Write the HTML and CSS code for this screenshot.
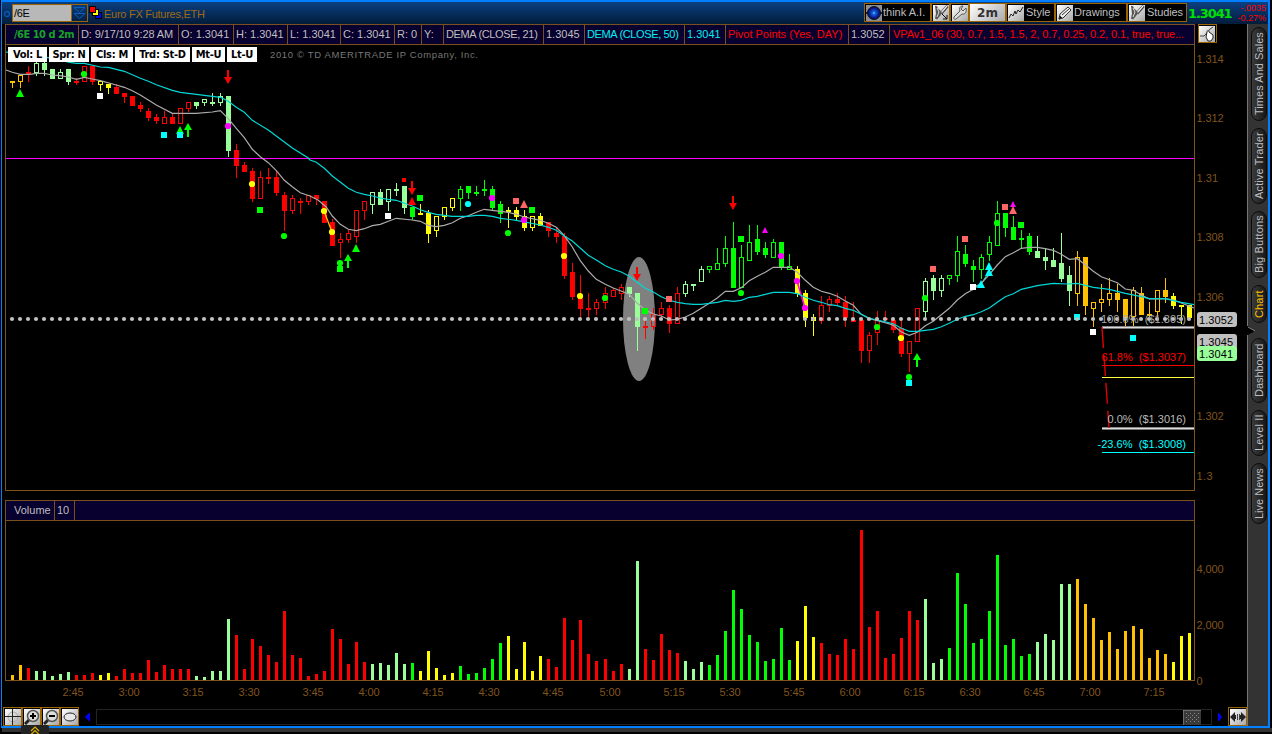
FILE: index.html
```html
<!DOCTYPE html>
<html lang="en">
<head>
<meta charset="utf-8">
<title>Euro FX Futures</title>
<link rel="stylesheet" href="styles.css">
</head>
<body>
<svg class="defs" width="0" height="0">
  <defs>
    <linearGradient id="metal" x1="0" y1="0" x2="1" y2="1"><stop offset="0" stop-color="#ffffff"/><stop offset="1" stop-color="#a8a8a8"/></linearGradient>
    <radialGradient id="orb"><stop offset="0" stop-color="#2fe0ff"/><stop offset=".25" stop-color="#1560d8"/><stop offset=".7" stop-color="#0a1e96"/><stop offset="1" stop-color="#04104e"/></radialGradient>
    <symbol id="brush" viewBox="0 0 16 16"><rect width="16" height="16" fill="url(#metal)"/><path d="M14.500 1 8 8.500" stroke="#444" stroke-width="3"/><path d="M14 1 8 8" stroke="#eee" stroke-width="1.2"/><path d="M2 1c3-1 2 3 5 4l2 3-2 3-3 3.500-2-1 1-5z" fill="#555"/><path d="M4 3l2 4-2 5" stroke="#ddd" fill="none"/></symbol>
  </defs>
</svg>
<div class="window">
  <header class="titlebar">
    <svg class="ring" width="8" height="8"><circle cx="4" cy="4" r="2.5" fill="none" stroke="#0b56b0" stroke-width="1.3"/></svg>
    <div class="symbol"><span class="symbol-text">/6E</span><svg class="symbol-drop" width="16" height="16"><path d="M2 2.500h11L7.500 7.500zM2 8.500h11L7.500 13.500z" fill="none" stroke="#0b60c0"/></svg></div>
    <svg class="squares" width="13" height="13"><path d="M6 6h7v7H6z" fill="#000"/><path d="M7 7h5v5H7z" fill="#00f"/><path d="M3 3h7v7H3z" fill="#000"/><path d="M4 4h5v5H4z" fill="#ff0"/><path d="M0 0h7v7H0z" fill="#000"/><path d="M1 1h5v5H1z" fill="#f00"/></svg>
    <span class="instrument">Euro FX Futures,ETH</span>
    <nav class="toolbar">
      <button class="tool think"><svg width="16" height="16"><rect width="16" height="16" fill="#8a8e98"/><path d="M0 8h16" stroke="#222" stroke-width="2"/><circle cx="8" cy="8" r="6.500" fill="url(#orb)" stroke="#111"/></svg><span>think A.I.</span></button>
      <button class="tool icon"><svg width="16" height="16"><use href="#brush"/><path d="M9 9l5 5M14 10v4h-4" stroke="#111" fill="none"/></svg></button>
      <button class="tool icon"><svg width="16" height="16"><rect width="16" height="16" fill="url(#metal)"/><path d="M14 3l-3 3-2-2 2-3C8 1 7 3 8 6L2 12c-1 2 1 3 2 2l6-5c3 1 5-2 4-6z" fill="#ddd" stroke="#555"/></svg></button>
      <button class="tool period">2m</button>
      <button class="tool style"><svg width="16" height="16"><rect width="16" height="16" fill="url(#metal)"/><path d="M1 13l2-4 2 2 2-5 1 3 2-4 2 2 3-5" stroke="#222" fill="none"/></svg><span>Style</span></button>
      <button class="tool drawings"><svg width="16" height="16"><rect width="16" height="16" fill="url(#metal)"/><path d="M2 14l1-5 8-7 3 3-8 8z" fill="#eee" stroke="#333"/><path d="M2 14l1-3 2 2zM5 10l7-6" stroke="#333"/></svg><span>Drawings</span></button>
      <button class="tool studies"><svg width="16" height="16"><use href="#brush"/></svg><span>Studies</span></button>
    </nav>
    <strong class="last">1.3041</strong>
    <div class="change"><span>-.0035</span><span>-0.27%</span></div>
  </header>

  <div class="workspace">
    <main class="chart">
      <div class="info-row">
        <div class="readout">
          <span class="head">/6E 10 d 2m</span><span class="date">D: 9/17/10 9:28 AM</span><span>O: 1.3041</span><span>H: 1.3041</span><span>L: 1.3041</span><span>C: 1.3041</span><span>R: 0</span><span>Y:</span><span class="tight">DEMA (CLOSE, 21)</span><span>1.3045</span><span class="cyan tight">DEMA (CLOSE, 50)</span><span class="cyan">1.3041</span><span class="red pivot">Pivot Points (Yes, DAY)</span><span>1.3052</span><span class="red vpa">VPAv1_06 (30, 0.7, 1.5, 1.5, 2, 0.7, 0.25, 0.2, 0.1, true, true...</span>
        </div>
        <button class="hand"><svg width="16" height="16"><rect width="16" height="16" fill="url(#metal)"/><path d="M1 10h4l2-2 4-5 3-2" stroke="#444" fill="none"/><path d="M8 6c0-2 2-2 2 0l4 3v3l-2 3H9l-2-4z" fill="#fff" stroke="#222"/></svg></button>
      </div>
      <div class="price-pane">
        <svg id="price" width="1241" height="455" viewBox="5 45 1241 455"></svg>
        <div class="badges"><b>Vol: L</b><b>Spr: N</b><b>Cls: M</b><b>Trd: St-D</b><b>Mt-U</b><b>Lt-U</b></div>
      </div>
      <div class="volume-head"><span>Volume</span><span>10</span></div>
      <svg id="volume" width="1241" height="186" viewBox="5 521 1241 186"></svg>
      <footer class="bottom">
        <button><svg width="16" height="16"><rect width="16" height="16" fill="url(#metal)"/><circle cx="8" cy="8" r="5" fill="none" stroke="#aaa"/><path d="M7.500 0v16M0 7.500h16" stroke="#222"/></svg></button>
        <button><svg width="16" height="16"><rect width="16" height="16" fill="url(#metal)"/><path d="M1 15l4-4" stroke="#222" stroke-width="3"/><circle cx="9" cy="7" r="5.5" fill="#ddd" stroke="#555" stroke-width="1.5"/><path d="M9 4v6M6 7h6" stroke="#000" stroke-width="2"/></svg></button>
        <button><svg width="16" height="16"><rect width="16" height="16" fill="url(#metal)"/><path d="M1 15l4-4" stroke="#222" stroke-width="3"/><circle cx="9" cy="7" r="5.5" fill="#ddd" stroke="#555" stroke-width="1.5"/><path d="M6 7h6" stroke="#000" stroke-width="2"/></svg></button>
        <button><svg width="16" height="16"><rect width="16" height="16" fill="url(#metal)"/><ellipse cx="8" cy="8" rx="6" ry="4" fill="#e8e8e8" stroke="#222"/></svg></button>
        <svg class="arrow-left" width="17" height="19"><path d="M11 6v8h-1l-4-4 4-4z" fill="#00f"/></svg>
        <div class="track"><svg width="18" height="15"><rect width="18" height="15" fill="#3a3a3a"/><path d="M0 15V0h18" stroke="#999" fill="none"/><path d="M3 3.5h13M5 5.5h12M3 7.5h13M5 9.5h12M3 11.5h13" stroke="#888" stroke-dasharray="1 3"/></svg><i></i></div>
        <svg class="arrow-right" width="16" height="19"><path d="M6 6v8h1l3-4-3-4z" fill="#00f"/></svg>
        <button><svg width="16" height="16"><rect width="16" height="16" fill="url(#metal)"/><path d="M0 8l5-5v3h1v4H5v3zM16 8l-5-5v3h-1v4h1v3z" fill="#222"/><path d="M7.500 5v6M9.500 5v6" stroke="#444"/></svg></button>
      </footer>
    </main>
    <aside class="side">
      <span class="tab t1">Times And Sales</span><span class="tab t2">Active Trader</span><span class="tab t3">Big Buttons</span><span class="tab t4 active">Chart</span><span class="tab t5">Dashboard</span><span class="tab t6">Level II</span><span class="tab t7">Live News</span>
      <svg class="notch" width="9" height="10"><path d="M0 0h1l7 5-7 4H0z" fill="#000"/><path d="M1 1l7 4" stroke="#888"/></svg>
    </aside>
  </div>
</div>
<div class="drawer"><svg width="28" height="9"><path d="M10 6l4-4 4 4M10 9.500l4-4 4 4" fill="none" stroke="#e0b000" stroke-width="1.2"/></svg></div>
<script src="chart.js"></script>
</body>
</html>
```
FILE: styles.css
```css
* { box-sizing: border-box; }
body { margin: 0; width: 1272px; height: 734px; overflow: hidden; position: relative; background: #000; font: 11px/13px "Liberation Sans", Arial, sans-serif; color: #bfbfbf; }
body::after { content: ""; display: block; height: 4px; margin-left: 2px; background: #333; }
.defs { position: absolute; }
button { margin: 0; padding: 0; border: 1px solid #9b6505; background: #000; color: inherit; font: inherit; }
svg { display: block; flex: none; }
svg text { white-space: pre; }
.window { width: 1269px; height: 728px; margin-left: 1px; border: 2px solid #0080ff; border-left-width: 1px; display: flex; flex-direction: column; }

.titlebar { height: 22px; padding: 1px 1px 0 1px; display: flex; align-items: flex-start; background: linear-gradient(#0b4082, #021c3a); }
.ring { margin-top: 7px; }
.symbol { display: flex; width: 76px; height: 18px; margin-left: 1px; margin-top: 1px; border: 1px solid #9b6505; }
.symbol-text { width: 58px; padding: 2px 1px; background: #b8b8b8; color: #000; letter-spacing: -.3px; }
.symbol-drop { border-left: 1px solid #9b6505; }
.squares { margin: 3px 0 0 1px; }
.instrument { margin: 5px 0 0 2px; color: #a06a10; letter-spacing: -.27px; }
.toolbar { display: flex; margin-left: auto; width: 323px; }
.tool { display: flex; align-items: center; height: 19px; gap: 1px; padding: 0 1px; overflow: hidden; white-space: nowrap; }
.think { width: 67px; }
.icon { width: 19px; padding: 0; justify-content: center; }
.period { width: 37px; justify-content: center; color: #333; background: linear-gradient(135deg, #fff, #aaa); font: bold 12px "DejaVu Sans", sans-serif; }
.style { width: 49px; gap: 2px; }
.drawings { width: 72px; }
.studies { width: 60px; gap: 2px; letter-spacing: -.1px; }
.last { width: 43px; margin: 4px 6px 0 1px; color: #00e000; font: bold 13px/14px "DejaVu Sans", sans-serif; letter-spacing: -1.1px; }
.change { display: flex; flex-direction: column; width: 30px; color: #f00; font-size: 9px; line-height: 10px; text-align: right; padding-right: 1px; }

.workspace { display: flex; height: 702px; }
.chart { width: 1245px; padding-left: 2px; display: flex; flex-direction: column; }
.info-row { display: flex; height: 21px; margin-left: 1px; }
.readout { display: grid; width: 1190px; border: 1px solid #7a5020; grid-template-columns: 73px 100px 55px 54px 53px 54px 27px 22px 100px 41px 100px 41px 123px 41px 304px; background: #08002e; }
.readout span { padding: 3px 0 0 2px; white-space: nowrap; overflow: hidden; border-right: 1px solid #7a5020; }
.readout span:last-child { border-right: 0; }
.readout .head { color: #18a028; font: bold 11px/13px "DejaVu Sans Condensed", "DejaVu Sans", sans-serif; padding-left: 8px; letter-spacing: -.5px; }
.readout .date { letter-spacing: -.12px; }
.readout .tight { letter-spacing: -.36px; }
.readout .cyan { color: #00f0f0; }
.readout .red { color: #f00; }
.readout .vpa { letter-spacing: -.1px; padding-left: 3px; }
.hand { width: 19px; height: 19px; margin-left: 3px; }
.price-pane { position: relative; height: 455px; margin-left: 1px; }
.badges { position: absolute; left: 3px; top: 2px; display: flex; gap: 2px; color: #000; }
.badges b { height: 15px; background: #fff; font: bold 11px/15px "DejaVu Sans Condensed", "DejaVu Sans", sans-serif; letter-spacing: -.3px; text-align: center; width: 39px; white-space: nowrap; }
.badges b:nth-child(2) { width: 40px; }
.badges b:nth-child(3) { width: 42px; }
.badges b:nth-child(4) { width: 55px; }
.badges b:nth-child(5) { width: 33px; }
.badges b:nth-child(6) { width: 30px; }
.volume-head { display: flex; width: 1190px; height: 21px; margin-left: 1px; border: 1px solid #7a5020; background: #08002e; }
.volume-head span { padding: 3px 0 0 8px; width: 49px; border-right: 1px solid #7a5020; }
.volume-head span + span { padding-left: 2px; width: 20px; }
#volume { margin-left: 1px; }
.bottom { display: flex; height: 19px; margin-left: -1px; }
.bottom button { width: 19px; height: 19px; display: flex; align-items: center; justify-content: center; flex: none; }
.track { flex: 1; display: flex; justify-content: flex-end; align-items: center; margin: 2px 0 1px; border: 1px solid #242424; border-right: 0; }
.track i { width: 11px; height: 15px; border-right: 1px solid #222; }

.side { position: relative; width: 21px; background: #333; border-left: 1px solid #777; display: flex; flex-direction: column; gap: 7px; padding: 3px 0 0 3px; }
.tab { width: 16px; flex: none; display: flex; align-items: center; justify-content: center; writing-mode: vertical-rl; transform: rotate(180deg); border: 1px solid #0b0b0b; border-radius: 8px; background: linear-gradient(90deg, #181818, #3b3b3b); letter-spacing: .15px; white-space: nowrap; }
.t1 { height: 94px; letter-spacing: .05px; } .t2 { height: 76px; } .t3 { height: 67px; } .t4 { height: 38px; } .t5 { height: 65px; margin-top: 8px; letter-spacing: -.05px; } .t6 { height: 46px; } .t7 { height: 61px; letter-spacing: 0; }
.active { color: #ffc000; }
.notch { position: absolute; left: -1px; top: 302px; }
.drawer { position: absolute; left: 21px; top: 725px; width: 28px; height: 9px; background: #222; border-radius: 2px 2px 0 0; }
```
FILE: chart.js
```js
const C = { O: '#ffc000', R: '#ff0000', L: '#99ff99', G: '#00ff00', Y: '#ffff00', W: '#ffffff', C: '#00ffff', M: '#ff00ff', S: '#ff6666' };
const BROWN = '#80541e';
const slot = i => 12 + 8 * i + (i >= 74 ? 1 : 0);

// Each candle: colour + f(illed)/h(ollow), high, body top, body bottom, low, in thirds of a pixel below the block's base.
const blocks = [
  [60, `Of 63 63 69 84|Oh 45 45 66 84|Rf 18 36 42 66|Lh 3 9 39 48|Lf 3 9 30 48|Lf 27 27 57 57|Lh 27 36 57 57|Lf 27 27 66 75|Rf 54 63 69 75|Rh 18 18 66 66|Rf 18 18 66 75|Yh 63 63 75 93|Yf 72 72 84 102|Rf 72 81 102 102|Rf 99 99 111 129|Rf 108 108 138 138|Rf 126 135 147 156|Rf 144 153 174 183|Rf 162 171 183 192|Rh 153 171 192 192|Rf 162 171 192 192|Rh 144 144 192 192|Rh 126 126 147 156|Lf 126 126 138 147|Lh 117 117 129 138|Lf 99 126 132 138|Lh 99 108 129 138|Lf 108 108 273 291|Rf 252 270 318 354|Rf 306 315 336 336|Rf 324 333 417 426|Rh 333 351 417 417|Rf 324 351 357 372|Rf 333 351 399 408|Rf 396 405 453 513|Rh 405 414 453 462|Rf 414 423 429 462|Rh 405 405 426 435|Rf 405 405 417 435`],
  [160, `Rf 123 123 189 189|Rf 177 186 258 258|Rh 219 237 249 294|Rh 210 219 240 249|Rh 150 150 231 249|Rh 123 123 153 180|Lh 96 96 135 162|Lf 87 96 135 135|Lh 87 87 126 153|Lf 69 87 93 108|Lf 78 78 144 162|Gf 141 141 171 180|Yf 132 159 165 165|Yf 150 159 222 249|Yh 168 168 213 231|Yh 141 141 171 180|Yh 114 114 144 153|Gh 78 87 117 153|Gf 78 78 99 117|Gf 78 96 102 108|Gf 60 87 93 108|Gf 78 87 144 150|Gf 123 132 162 189|Yf 141 150 156 204|Yf 141 150 171 180|Yf 150 168 204 213|Yh 168 168 204 213|Yf 159 168 198 198|Rf 186 186 213 231|Rf 204 219 231 249|Rf 219 228 348 357|Rf 309 336 411 420|Rf 345 405 447 471|Rf 399 444 450 471|Rh 417 426 447 465`],
  [180, `Rh 321 339 369 387|Rh 324 330 351 351|Rh 312 321 342 360|Lf 321 321 342 351|Lf 339 339 441 513|Rf 420 438 444 477|Rh 384 402 441 450|Rh 366 384 405 420|Rf 375 384 432 459|Rh 321 339 432 432|Lh 303 312 342 351|Lf 312 312 318 333|Lh 258 267 306 306|Gh 258 258 270 279|Gh 204 249 270 270|Gh 168 204 252 261|Gf 126 204 324 324|Gh 195 231 324 324|Gh 135 186 243 243|Gf 135 177 216 225|Gf 186 204 225 234|Gh 177 186 234 234|Gf 186 186 264 270|Gh 222 258 270 270|Yf 258 267 342 351|Yf 330 339 414 441|Yf 402 411 423 468|Rh 348 375 423 432|Rh 348 357 378 396|Rf 339 357 369 378|Rf 348 366 414 441|Rf 366 420 426 426|Rf 420 420 513 549|Rh 456 465 513 549|Rh 393 420 459 495|Rf 393 414 420 420|Rf 420 420 450 459|Rf 420 444 522 531|Rh 483 483 522 576|Rh 384 384 486 486|Lh 294 303 396 414|Lf 285 294 333 360|Lh 285 294 333 351|Gh 285 285 297 315|Gh 168 213 288 306|Gf 195 222 252 261|Gf 240 258 270 306|Gh 222 231 270 297|Gh 168 186 225 243|Gh 63 99 198 198|Gf 99 99 144 171|Gf 108 141 180 180|Gf 150 174 180 204|Gf 159 168 216 225|Lf 168 213 234 234|Lf 207 231 243 270|Lf 204 240 261 261|Lf 159 249 297 306|Lf 258 285 333 378|Oh 213 231 342 378|Of 231 231 378 405|Oh 366 366 387 441|Oh 312 357 369 396|Oh 294 339 360 378|Of 312 339 360 396|Of 357 357 414 441|Oh 321 330 411 441|Of 321 339 405 405|Of 366 402 408 411|Oh 330 330 396 411|Of 294 330 351 369|Yf 339 348 378 387|Yf 375 375 381 432|Yf 375 375 414 414`]
];

const lines = {
  fast: [
    [0, 60, '18,30 37,37 61,43 90,43 109,40 133,40 157,45 181,47 205,51 229,58 253,52 277,57 301,62 349,75 373,82 397,92 421,105 469,135 517,160 589,160 637,156 661,152 685,176 709,205 733,233 757,268 781,290 805,308 829,332 853,361 877,380 901,398'],
    [310, 160, '0,108 24,120 48,140 67,168 91,193 115,208 139,212 163,206 187,197 211,193 235,184 259,175 307,180 331,184 355,196 379,200 403,196 427,188 451,175 475,167 499,157 523,148 595,157 619,163 643,171 691,181 715,190 739,202 763,227 787,261 811,302 835,333 859,358'],
    [600, 180, '16,313 40,324 88,343 112,370 136,390 160,402 184,408 208,420 232,418 256,411 280,400 304,385 328,370 352,354 376,334 400,334 424,323 448,302 472,289 496,277 520,262 568,262 592,277 616,301 640,322 664,334 688,340 712,349 736,363 760,376 784,403 808,416 832,422 856,428'],
    [880, 180, '40,436 64,456 88,466 112,457 136,437 160,424 184,404 208,385 232,360 256,341 280,328 304,310 328,284 352,255 376,230 400,218 424,205 448,202 472,202 496,206 520,211 544,223 568,238 592,236 616,254 640,274 664,290 688,299 712,308 736,327 760,331 784,345 808,357 856,356 880,360 904,369 942,384']
  ],
  slow: [
    [0, 60, '18,-24 140,-8 210,7 229,10 253,10 301,21 325,22 373,34 421,55 445,64 469,74 517,91 541,97 661,112 685,124 709,142 733,157 757,181 805,210 853,246 877,264 925,294'],
    [310, 160, '0,0 19,7 43,25 67,48 115,85 139,97 163,103 187,108 211,114 235,118 259,121 283,130 307,138 331,149 355,157 379,163 427,169 475,169 499,166 523,166 547,169 571,175 619,181 691,195 715,202 739,211 763,228 787,243 835,286 859,300'],
    [600, 180, '16,257 40,268 64,276 88,289 112,307 136,325 160,336 184,350 208,361 232,367 256,371 280,373 304,373 352,367 376,361 400,364 424,361 448,352 472,349 496,343 520,337 568,337 592,341 616,352 640,361 664,367 688,374 712,377 736,385 760,391 784,403 808,415 832,420 880,431'],
    [880, 180, '64,445 88,454 112,454 160,448 184,440 208,430 232,418 256,409 280,404 304,395 328,384 352,367 376,350 400,341 424,328 472,317 520,310 560,312 592,310 616,316 640,322 688,328 736,340 784,350 808,356 856,356 904,367 942,374']
  ]
};

// c = circle, s = square, q = small square, u = triangle, v = small triangle, a = up arrow, d = down arrow
const marks = `uG 20 93|cG 84 74|sW 100 96|sC 164 135|uG 180 130|sC 180 135|aG 188 123|dR 228 70|cM 228 126|cY 252 184|sG 260 210|cG 284 236|cY 324 211|cY 332 232|cG 340 263|sG 340 269|aG 348 254|uG 356 248|sW 388 216|qR 404 180|dR 412 181|uR 412 201|sG 420 198|cC 468 204|cM 492 198|sS 516 201|uS 524 204|sG 532 210|cM 524 220|cG 508 233|cY 564 256|cY 580 296|cG 605 298|dR 733 196|sG 741 239|vM 765 230|cM 781 256|cM 797 281|cM 805 308|cG 741 293|dR 637 267|sG 645 311|sS 669 299|cG 877 327|cY 901 338|cG 909 377|sC 909 383|aG 917 353|cG 925 298|sS 933 269|sS 965 239|sS 1005 207|vM 1013 204|uS 1013 210|sG 1021 225|cG 997 223|uC 989 266|uC 989 272|uC 981 284|sW 973 287|sC 1077 317|sW 1093 332|sC 1133 338`;

const rect = (x, y, w, h, fill) => `<rect x="${x}" y="${y}" width="${w}" height="${h}" fill="${fill}" shape-rendering="crispEdges"/>`;
const label = (x, y, w, s, fill, size = 11) => `<text x="${x}" y="${y}" textLength="${w}" font-size="${size}" fill="${fill}">${s}</text>`;

function candles() {
  let i = 0, out = '';
  for (const [base, rows] of blocks) for (const row of rows.split('|')) {
    const [kind, ...v] = row.split(' ');
    const [hi, top, bot, lo] = v.map(n => base + Math.round(n / 3));
    const x = slot(i++), col = C[kind[0]];
    out += rect(x, hi, 1, top - hi, col) + rect(x, bot, 1, lo - bot, col);
    out += kind[1] === 'f' ? rect(x - 2, top, 5, bot - top, col)
      : `<rect x="${x - 1.5}" y="${top + .5}" width="4" height="${bot - top - 1}" fill="none" stroke="${col}" shape-rendering="crispEdges"/>`;
  }
  return out;
}
function polyline(parts, stroke) {
  const pts = parts.flatMap(([ox, oy, s]) => s.split(' ').map(p => { const [x, y] = p.split(',').map(Number); return (ox + x / 3).toFixed(1) + ',' + (oy + y / 3).toFixed(1); }));
  return `<polyline points="${pts.join(' ')}" fill="none" stroke="${stroke}" stroke-width="1.2"/>`;
}
function mark(m) {
  const [k, xs, ys] = m.split(' '), x = +xs, y = +ys, f = C[k[1]];
  switch (k[0]) {
    case 'c': return `<circle cx="${x}" cy="${y}" r="3.1" fill="${f}"/>`;
    case 's': return rect(x - 3, y - 3, 6, 6, f);
    case 'q': return rect(x - 2, y - 2, 4, 4, f);
    case 'u': return `<path d="M${x} ${y - 4}l4 8h-8z" fill="${f}"/>`;
    case 'v': return `<path d="M${x} ${y - 3}l3 6h-6z" fill="${f}"/>`;
    case 'a': return `<path d="M${x} ${y}l4 7h-3v7h-2v-7h-3z" fill="${f}"/>`;
    case 'd': return `<path d="M${x} ${y + 14}l4-7h-3v-7h-2v7h-3z" fill="${f}"/>`;
  }
}

let p = `<ellipse cx="639" cy="319" rx="16" ry="62" fill="#808080"/>`;
p += candles() + rect(6, 158, 1188, 1, '#ff00ff');
p += `<path d="M324 211l8 21" stroke="#ffc000" stroke-width="1.3"/><path d="M797 281l8 27" stroke="#f0f" stroke-width="1.500"/><path d="M973 287l8-3 8-12" stroke="#0ff" fill="none"/>`;
p += polyline(lines.fast, '#acacac') + polyline(lines.slow, '#00d8d8');
p += marks.split('|').map(mark).join('');
for (let i = 0; i < 148; i++) p += `<circle cx="${slot(i)}" cy="319" r="2.1" fill="#c0c0c0"/>`;
p += rect(1102, 326, 92, 1, '#888') + rect(1102, 327, 92, 1, '#ddd') + rect(1102, 328, 92, 1, '#777') + rect(1102, 365, 92, 1, '#f00') + rect(1102, 377, 92, 1, '#ffff40');
p += rect(1102, 427, 92, 1, '#888') + rect(1102, 428, 92, 1, '#ddd') + rect(1102, 429, 92, 1, '#777') + rect(1102, 452, 92, 1, '#0ff');
p += `<path d="M1102 327l7 101" stroke="#e00000" stroke-width="1.4" stroke-dasharray="21 7"/>`;
p += label(1101, 322.500, 85, '100.0%  ($1.305)', '#a8a8a8') + label(1101.500, 361, 84.500, '61.8%  ($1.3037)', '#f00') + label(1107.500, 423, 78.500, '0.0%  ($1.3016)', '#bbb') + label(1097.500, 448, 88.500, '-23.6%  ($1.3008)', '#0ff');
p += rect(5, 45, 1, 446, BROWN) + rect(1194, 45, 1, 446, BROWN) + rect(5, 490, 1190, 1, BROWN);
for (const [s, y] of [['1.314', 63], ['1.312', 122], ['1.31', 182], ['1.308', 241], ['1.306', 301], ['1.302', 420], ['1.3', 480]])
  p += label(1196.500, y, s.length * 5.5 - .5, s, BROWN);
for (const [s, y, f] of [['1.3052', 312, '#c0c0c0'], ['1.3045', 334, '#c0c0c0'], ['1.3041', 346, '#99ff99']])
  p += `<rect x="1197" y="${y}" width="40" height="15" rx="3" fill="${f}"/>` + label(1199, y + 11.500, 34, s, '#000');
p += label(270, 58, 208, '2010 © TD AMERITRADE IP Company, Inc.', '#777', 9.500);
document.getElementById('price').innerHTML = p;

// Bar heights in pixels, one colour letter per bar.
const heights = [5,15,12,9,9,4,6,8,5,5,7,5,7,4,11,7,7,20,8,15,11,11,11,4,3,9,9,61,45,11,41,34,25,18,69,25,22,4,6,9,51,41,16,38,18,16,17,15,27,16,17,9,29,12,5,7,14,6,7,12,21,37,44,11,38,9,24,21,13,62,40,60,26,19,21,9,16,11,119,31,20,46,30,27,19,11,18,15,25,49,90,71,45,38,19,21,52,20,39,74,43,37,26,25,41,31,150,53,69,22,26,42,69,60,81,17,21,32,107,76,37,41,69,125,35,41,24,26,38,46,40,96,96,101,76,62,40,48,31,49,54,51,22,30,26,18,44,47];
const tones = 'OORLLLLLRRRYYRRRRRRRRRRLLLLL' + 'R'.repeat(17) + 'LLLLLGYYYYYGGGGGGYYYYY' + 'R'.repeat(10) + 'LLRRRRRLLL' + 'G'.repeat(11) + 'YYY' + 'R'.repeat(13) + 'LLL' + 'G'.repeat(11) + 'LLLLL' + 'O'.repeat(12) + 'YYY';
let v = heights.map((h, i) => rect(slot(i) - 1, 680 - h, 3, h, C[tones[i]])).join('');
v += rect(5, 521, 1, 160, BROWN) + rect(1194, 521, 1, 160, BROWN) + rect(5, 680, 1190, 1, BROWN);
const times = { '2:45': 73, '3:00': 129, '3:15': 193, '3:30': 249, '3:45': 313, '4:00': 369, '4:15': 433, '4:30': 489, '4:45': 553, '5:00': 610, '5:15': 674, '5:30': 730, '5:45': 794, '6:00': 850, '6:15': 914, '6:30': 970, '6:45': 1034, '7:00': 1090, '7:15': 1154 };
for (const t in times) v += label(times[t] - 10.500, 696, 21, t, BROWN);
v += label(1196.500, 573, 27, '4,000', BROWN) + label(1196.500, 629, 27, '2,000', BROWN) + label(1196.500, 685, 6, '0', BROWN);
document.getElementById('volume').innerHTML = v;
```
